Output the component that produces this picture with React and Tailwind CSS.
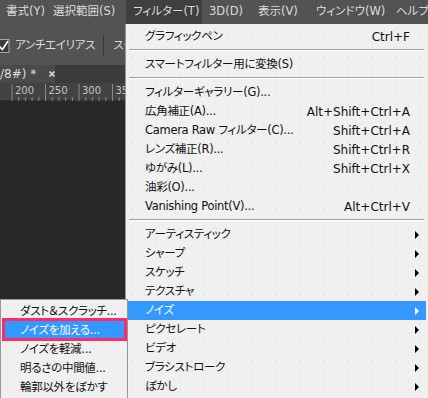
import React from "react";

const menuBar = [
  { label: "書式(Y)", w: "w-[47px] -ml-[1px]" },
  { label: "選択範囲(S)", w: "w-[80px]" },
  { label: "フィルター(T)", w: "w-[76px]", active: true },
  { label: "3D(D)", w: "w-[49px]" },
  { label: "表示(V)", w: "w-[58px]" },
  { label: "ウィンドウ(W)", w: "w-[80px]" },
  { label: "ヘルプ(H)", w: "w-[60px]" },
];

const filterMenu = [
  { label: "グラフィックペン", key: "Ctrl+F" },
  { sep: true },
  { label: "スマートフィルター用に変換(S)" },
  { sep: true },
  { label: "フィルターギャラリー(G)..." },
  { label: "広角補正(A)...", key: "Alt+Shift+Ctrl+A" },
  { label: "Camera Raw フィルター(C)...", key: "Shift+Ctrl+A" },
  { label: "レンズ補正(R)...", key: "Shift+Ctrl+R" },
  { label: "ゆがみ(L)...", key: "Shift+Ctrl+X" },
  { label: "油彩(O)..." },
  { label: "Vanishing Point(V)...", key: "Alt+Ctrl+V" },
  { sep: true },
  { label: "アーティスティック", sub: true },
  { label: "シャープ", sub: true },
  { label: "スケッチ", sub: true },
  { label: "テクスチャ", sub: true },
  { label: "ノイズ", sub: true, active: true },
  { label: "ピクセレート", sub: true },
  { label: "ビデオ", sub: true },
  { label: "ブラシストローク", sub: true },
  { label: "ぼかし", sub: true },
];

const noiseMenu = [
  { label: "ダスト＆スクラッチ..." },
  { label: "ノイズを加える...", active: true },
  { label: "ノイズを軽減..." },
  { label: "明るさの中間値..." },
  { label: "輪郭以外をぼかす" },
];

function Arrow({ white }) {
  return (
    <span
      className={
        "absolute right-[7px] top-[6px] h-0 w-0 border-y-[4px] border-l-[4px] border-y-transparent " +
        (white ? "border-l-white" : "border-l-black")
      }
    />
  );
}

function MenuRow({ item }) {
  if (item.sep) {
    return (
      <div className="pt-[3px] pb-[4px] pl-[1px] pr-[2px]">
        <div className="border-t border-b border-t-[#a0a0a0] border-b-white" />
      </div>
    );
  }
  return (
    <div
      className={
        "relative flex h-[19px] items-center justify-between whitespace-nowrap pl-[17px] pr-[16px] " +
        (item.active ? "bg-[#3399ff] text-white" : "text-[#111]")
      }
    >
      <span className="text-[11.5px] tracking-[-0.3px]">{item.label}</span>
      {item.key && <span className="text-[12px]">{item.key}</span>}
      {item.sub && <Arrow white={item.active} />}
    </div>
  );
}

function Ruler() {
  const majors = [12, 45.5, 79, 112.5];
  const labels = ["200", "250", "300", "350"];
  const minors = [];
  for (let i = 0; i < 4; i++) {
    for (let j = 1; j < 5; j++) minors.push(majors[i] + (33.5 / 5) * j);
  }
  return (
    <svg width="428" height="18" className="block">
      {majors.map((x, i) => (
        <g key={x}>
          <line x1={x} y1="1" x2={x} y2="18" stroke="#8a8a8a" strokeWidth="1" />
          <text x={x + 3} y="11" fontSize="10" fill="#c4c4c4" fontFamily="DejaVu Sans, sans-serif">
            {labels[i]}
          </text>
        </g>
      ))}
      {minors.map((x) => (
        <line key={x} x1={x} y1="14" x2={x} y2="18" stroke="#8a8a8a" strokeWidth="1" />
      ))}
    </svg>
  );
}

export default function App() {
  return (
    <div
      className="relative h-[398px] w-[428px] overflow-hidden bg-[#282828] text-[12px] leading-none [font-feature-settings:'palt']"
      style={{ fontFamily: '"DejaVu Sans", "Noto Sans CJK JP", sans-serif' }}
    >
      {/* menu bar */}
      <div className="flex h-[24px] bg-[#535353] text-[11.5px] text-[#dcdcdc]">
        {menuBar.map((m) => (
          <div
            key={m.label}
            className={
              "flex shrink-0 items-center whitespace-nowrap pl-[7px] " +
              m.w +
              (m.active ? " bg-[#3f3f3f]" : "")
            }
          >
            {m.label}
          </div>
        ))}
      </div>

      {/* options bar */}
      <div className="flex h-[41px] items-center bg-[#535353] pt-[3px] text-[11.5px] text-[#dcdcdc]">
        <svg width="10" height="14" className="shrink-0">
          <rect x="-4" y="0.5" width="13" height="13" fill="#3a3a3a" stroke="#a8a8a8" />
          <path d="M-1 7 L2.5 10.5 L8 2" fill="none" stroke="#ffffff" strokeWidth="1.6" />
        </svg>
        <span className="ml-[5px] whitespace-nowrap tracking-[-0.3px]">アンチエイリアス</span>
        <div className="ml-[8px] h-[22px] w-px bg-[#3a3a3a]" />
        <span className="ml-[9px] whitespace-nowrap">スタイル</span>
      </div>

      {/* document tab */}
      <div className="flex h-[18px] bg-[#3b3b3b]">
        <div className="flex w-[55px] items-center bg-[#4a4a4a] text-[12px] text-[#dcdcdc]">
          <span className="whitespace-nowrap">/8#) *</span>
          <svg width="6" height="6" className="ml-[13px] shrink-0">
            <path d="M0.5 0.5 L5.5 5.5 M5.5 0.5 L0.5 5.5" stroke="#d0d0d0" strokeWidth="1.6" />
          </svg>
        </div>
      </div>

      {/* ruler */}
      <div className="h-[18px] border-b border-[#2e2e2e] bg-[#424242]">
        <Ruler />
      </div>

      {/* filter menu */}
      <div className="absolute left-[125px] top-[24px] h-[380px] w-[303px] border-l border-[#979797] bg-[#f0f0f0] bg-[radial-gradient(circle,#e2e2e2_0.6px,transparent_0.9px)] bg-size-[12px_9.5px] pl-[2px] pr-[2px] pt-[3px]">
        {filterMenu.map((item, i) => (
          <MenuRow key={i} item={item} />
        ))}
      </div>

      {/* noise submenu */}
      <div className="absolute left-0 top-[299px] h-[104px] w-[128px] border border-[#979797] bg-[#f0f0f0] bg-[radial-gradient(circle,#e2e2e2_0.6px,transparent_0.9px)] bg-size-[12px_9.5px] p-[2px]">
        {noiseMenu.map((item, i) => (
          <MenuRow key={i} item={item} />
        ))}
      </div>

      {/* annotation frame */}
      <div className="absolute left-[2px] top-[318px] h-[23px] w-[125px] border-[3px] border-[#ff2a6a]" />
    </div>
  );
}
